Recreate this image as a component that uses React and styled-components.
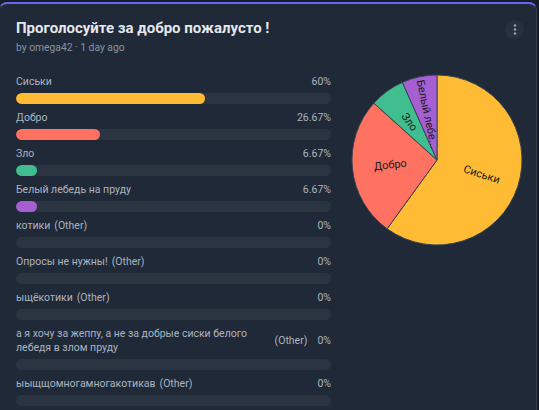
import React from 'react'
import styled, { createGlobalStyle } from 'styled-components'

const GlobalStyle = createGlobalStyle`
  html, body {
    margin: 0;
    padding: 0;
    background: #171d28;
    font-family: Roboto, "Noto Sans", sans-serif;
    overflow: hidden;
  }
`

const Card = styled.div`
  margin: 2px 0 0 -1px;
  width: 538px;
  height: 420px;
  box-sizing: border-box;
  background: #1f2937;
  border: 1px solid #343d4b;
  border-top: 2px solid #6366f1;
  border-radius: 8px 8px 0 0;
  padding: 14px 12px 0 16px;
`

const Header = styled.div`
  display: flex;
  justify-content: space-between;
  align-items: flex-start;
`

const Title = styled.h2`
  margin: 0;
  font-size: 15px;
  line-height: 20px;
  font-weight: 700;
  color: #e5e7eb;
`

const Meta = styled.div`
  font-size: 10.3px;
  line-height: 16px;
  color: #8b94a3;
  margin-top: 2px;
`

const MenuButton = styled.button`
  width: 19px;
  height: 19px;
  margin-top: 2px;
  border: none;
  border-radius: 50%;
  background: #29313e;
  display: flex;
  align-items: center;
  justify-content: center;
  padding: 0;
`

const Body = styled.div`
  display: grid;
  grid-template-columns: 315px 172px;
  column-gap: 20px;
  margin-top: 19px;
`

const Options = styled.div`
  display: flex;
  flex-direction: column;
  row-gap: 7px;
`

const Option = styled.div`
  display: flex;
  flex-direction: column;
  row-gap: 4px;
`

const LabelRow = styled.div`
  display: flex;
  justify-content: space-between;
  align-items: center;
  column-gap: 10px;
  font-size: 10.5px;
  line-height: 14px;
  color: #acb4c0;
`

const LabelText = styled.div`
  display: flex;
  align-items: center;
  column-gap: 4px;
  min-width: 0;
`

const Percent = styled.span`
  flex-shrink: 0;
`

const Track = styled.div`
  height: 11px;
  border-radius: 6px;
  background: #2b3441;
  overflow: hidden;
`

const Fill = styled.div`
  height: 100%;
  border-radius: 6px;
  background: ${(p) => p.color};
`

const PieBox = styled.div`
  margin-top: -1px;
`

const options = [
  { label: 'Сиськи', value: 60, text: '60%', color: '#ffbb33' },
  { label: 'Добро', value: 26.67, text: '26.67%', color: '#ff7262' },
  { label: 'Зло', value: 6.67, text: '6.67%', color: '#41be90' },
  { label: 'Белый лебедь на пруду', value: 6.67, text: '6.67%', color: '#a65fd3' },
  { label: 'котики', other: true, value: 0, text: '0%' },
  { label: 'Опросы не нужны!', other: true, value: 0, text: '0%' },
  { label: 'ыщёкотики', other: true, value: 0, text: '0%' },
  { label: 'а я хочу за жеппу, а не за добрые сиски белого лебедя в злом пруду', other: true, value: 0, text: '0%' },
  { label: 'ыыщщомногамногакотикав', other: true, value: 0, text: '0%' },
]

const slices = [
  { label: 'Сиськи', value: 60, color: '#ffbb33' },
  { label: 'Добро', value: 26.67, color: '#ff7262' },
  { label: 'Зло', value: 6.67, color: '#41be90' },
  { label: 'Белый лебе...', value: 6.67, color: '#a65fd3' },
]

const DotsIcon = () => (
  <svg width="4" height="11" viewBox="0 0 4 11">
    <circle cx="2" cy="1.5" r="1.2" fill="#9aa3b0" />
    <circle cx="2" cy="5.5" r="1.2" fill="#9aa3b0" />
    <circle cx="2" cy="9.5" r="1.2" fill="#9aa3b0" />
  </svg>
)

const Pie = () => {
  const cx = 86
  const cy = 86
  const r = 85
  const total = slices.reduce((s, x) => s + x.value, 0)
  const pt = (deg, rad) => {
    const a = (deg * Math.PI) / 180
    return [cx + rad * Math.sin(a), cy - rad * Math.cos(a)]
  }
  let start = 0
  return (
    <svg width="172" height="172" viewBox="0 0 172 172">
      {slices.map((s) => {
        const sweep = (s.value / total) * 360
        const end = start + sweep
        const [x1, y1] = pt(start, r)
        const [x2, y2] = pt(end, r)
        const large = sweep > 180 ? 1 : 0
        const mid = start + sweep / 2
        const [lx, ly] = pt(mid, 47)
        const rot = mid < 180 ? mid - 90 : mid - 270
        start = end
        return (
          <g key={s.label}>
            <path
              d={`M${cx},${cy} L${x1},${y1} A${r},${r} 0 ${large} 1 ${x2},${y2} Z`}
              fill={s.color}
              stroke="#3a4352"
              strokeWidth="1"
            />
            <text
              x={lx}
              y={ly}
              transform={`rotate(${rot} ${lx} ${ly})`}
              textAnchor="middle"
              dominantBaseline="central"
              fontSize="11"
              fontFamily="Roboto, sans-serif"
              fill="#1b1b1b"
            >
              {s.label}
            </text>
          </g>
        )
      })}
    </svg>
  )
}

export default function App() {
  return (
    <>
      <GlobalStyle />
      <Card>
        <Header>
          <div>
            <Title>Проголосуйте за добро пожалусто !</Title>
            <Meta>by omega42 · 1 day ago</Meta>
          </div>
          <MenuButton>
            <DotsIcon />
          </MenuButton>
        </Header>
        <Body>
          <Options>
            {options.map((o) => (
              <Option key={o.label}>
                <LabelRow>
                  <LabelText>
                    <span>{o.label}</span>
                    {o.other && <span>(Other)</span>}
                  </LabelText>
                  <Percent>{o.text}</Percent>
                </LabelRow>
                <Track>
                  {o.value > 0 && <Fill color={o.color} style={{ width: `${o.value}%` }} />}
                </Track>
              </Option>
            ))}
          </Options>
          <PieBox>
            <Pie />
          </PieBox>
        </Body>
      </Card>
    </>
  )
}
